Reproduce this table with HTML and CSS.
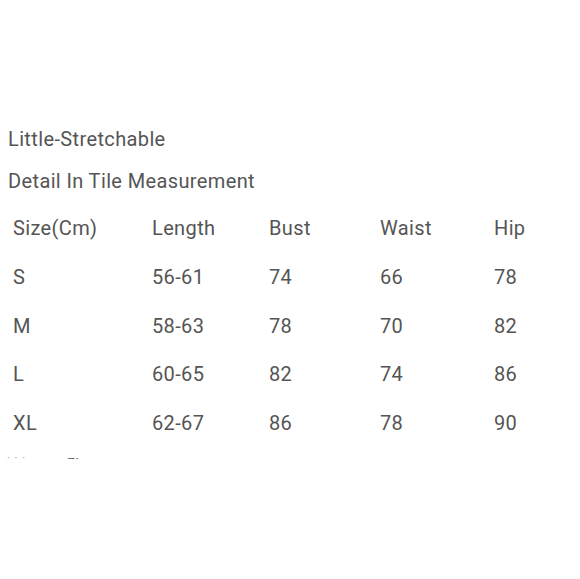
FILE: index.html
```html
<!DOCTYPE html>
<html>
<head>
<meta charset="utf-8">
<link rel="stylesheet" href="styles.css">
</head>
<body>
<div class="page">
  <p class="line">Little-Stretchable</p>
  <p class="line">Detail In Tile Measurement</p>
  <div class="table">
    <div class="row"><span>Size(Cm)</span><span>Length</span><span>Bust</span><span>Waist</span><span>Hip</span></div>
    <div class="row"><span>S</span><span>56-61</span><span>74</span><span>66</span><span>78</span></div>
    <div class="row"><span>M</span><span>58-63</span><span>78</span><span>70</span><span>82</span></div>
    <div class="row"><span>L</span><span>60-65</span><span>82</span><span>74</span><span>86</span></div>
    <div class="row"><span>XL</span><span>62-67</span><span>86</span><span>78</span><span>90</span></div>
  </div>
  <div class="marks"><span class="m1">· · ·</span><span class="m2">–·</span></div>
</div>
</body>
</html>
```
FILE: styles.css
```css
html, body {
  margin: 0;
  padding: 0;
  background: #ffffff;
}
.page {
  width: 580px;
  height: 579px;
  overflow: hidden;
  padding-top: 118px;
  box-sizing: border-box;
  font-family: Roboto, "Liberation Sans", sans-serif;
  font-size: 20px;
  letter-spacing: 0.37px;
  color: #555555;
}
.line {
  margin: 0;
  padding-left: 8px;
  height: 42px;
  line-height: 42px;
  white-space: nowrap;
}
.table {
  padding-top: 2px;
  padding-left: 13px;
}
.row {
  display: grid;
  grid-template-columns: 139px 117px 111px 114px 1fr;
  height: 48.75px;
  line-height: 48.75px;
  white-space: nowrap;
}
.marks {
  display: flex;
  padding-left: 7px;
  margin-top: 4px;
  height: 14px;
  line-height: 14px;
  font-size: 11px;
  letter-spacing: 0;
  color: #9a9a9a;
}
.m1 {
  width: 60px;
  letter-spacing: 1px;
}
.m2 {
  color: #6a6a6a;
  font-size: 13px;
}
```
